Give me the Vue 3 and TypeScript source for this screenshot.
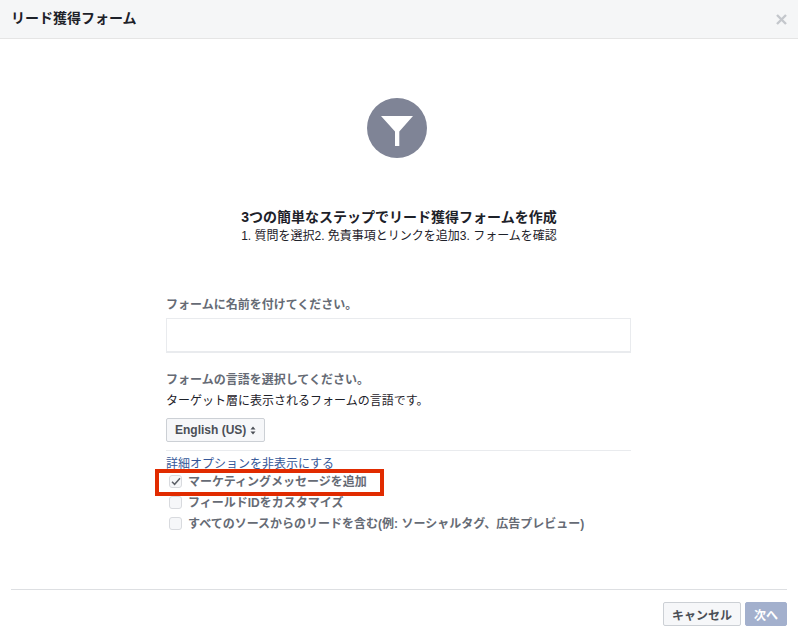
<script setup lang="ts">
interface Opt { label: string; checked: boolean }
const options: Opt[] = [
  { label: 'マーケティングメッセージを追加', checked: true },
  { label: 'フィールドIDをカスタマイズ', checked: false },
  { label: 'すべてのソースからのリードを含む(例: ソーシャルタグ、広告プレビュー)', checked: false },
]
</script>

<template>
  <div class="dialog">
    <header class="head">
      <span class="head-title">リード獲得フォーム</span>
      <svg class="close" width="11" height="11" viewBox="0 0 11 11"><path d="M1 1 10 10M10 1 1 10" stroke="#c4c7cc" stroke-width="2.4" fill="none"/></svg>
    </header>
    <main class="body">
      <svg class="funnel" width="60" height="60" viewBox="0 0 60 60">
        <circle cx="30" cy="30" r="30" fill="#7f8496"/>
        <path d="M14 18H46L32.300 33.500V48H28V33.500Z" fill="#fff"/>
      </svg>
      <h1 class="title">3つの簡単なステップでリード獲得フォームを作成</h1>
      <p class="steps">1. 質問を選択2. 免責事項とリンクを追加3. フォームを確認</p>
      <form class="form" @submit.prevent>
        <label class="label">フォームに名前を付けてください。</label>
        <input class="input" type="text" />
        <label class="label lang">フォームの言語を選択してください。</label>
        <p class="hint">ターゲット層に表示されるフォームの言語です。</p>
        <button class="select" type="button">
          English (US)
          <svg width="6" height="9" viewBox="0 0 6 9"><path d="M3 0.500 5.500 3.500H.5ZM3 8.500 .5 5.500H5.500Z" fill="#4b4f56"/></svg>
        </button>
        <div class="rule"></div>
        <a class="link">詳細オプションを非表示にする</a>
        <div class="checks">
          <div v-for="o in options" :key="o.label" class="check">
            <span class="box">
              <svg v-if="o.checked" width="10" height="9" viewBox="0 0 10 9"><path d="M1 4.800 3.600 7.300 9 1.200" stroke="#5d6168" stroke-width="1.500" fill="none"/></svg>
            </span>
            <span class="check-text">{{ o.label }}</span>
          </div>
          <div class="highlight"></div>
        </div>
      </form>
    </main>
    <footer class="foot">
      <div class="foot-inner">
        <button class="btn" type="button">キャンセル</button>
        <button class="btn primary" type="button">次へ</button>
      </div>
    </footer>
  </div>
</template>

<style scoped>
.dialog {
  width: 798px;
  height: 635px;
  background: #fff;
  display: flex;
  flex-direction: column;
  font-family: "Liberation Sans", "Noto Sans CJK JP", sans-serif;
  overflow: hidden;
}
.head {
  height: 38px;
  flex: none;
  background: #f5f6f7;
  border-bottom: 1px solid #e5e5e5;
  display: flex;
  align-items: center;
  justify-content: space-between;
  padding: 0 11px;
}
.head-title { font-size: 14px; line-height: 18px; font-weight: 700; color: #1d2129; margin-bottom: 3px; }
.close { margin-top: 1px; }
.body {
  flex: 1;
  display: flex;
  flex-direction: column;
  align-items: center;
  padding-top: 59px;
}
.funnel { display: block; margin-right: 4px; }
.title {
  margin: 50px 0 0;
  font-size: 14px;
  line-height: 18px;
  font-weight: 700;
  color: #1d2129;
}
.steps {
  margin: 2px 0 0;
  font-size: 12px;
  line-height: 16px;
  color: #1d2129;
}
.form {
  width: 465px;
  margin-top: 53px;
  align-self: flex-start;
  margin-left: 166px;
  display: flex;
  flex-direction: column;
  align-items: flex-start;
}
.label {
  font-size: 12px;
  line-height: 16px;
  font-weight: 700;
  color: #666b75;
}
.input {
  display: block;
  box-sizing: border-box;
  width: 465px;
  height: 35px;
  margin-top: 5px;
  border: 1px solid #e9ebee;
  border-bottom-width: 2px;
  background: #fff;
  outline: none;
}
.lang { margin-top: 19px; }
.hint {
  margin: 5px 0 0;
  font-size: 12px;
  line-height: 16px;
  color: #1d2129;
}
.select {
  box-sizing: border-box;
  height: 24px;
  margin-top: 9px;
  padding: 0 8px;
  display: flex;
  align-items: center;
  gap: 4px;
  border: 1px solid #ccd0d5;
  border-radius: 2px;
  background: #f6f7f9;
  font: 700 12px "Liberation Sans", "Noto Sans CJK JP", sans-serif;
  color: #4b4f56;
}
.rule {
  width: 100%;
  height: 1px;
  background: #e9ebee;
  margin-top: 8px;
}
.link {
  margin-top: 6px;
  font-size: 12px;
  line-height: 15px;
  color: #365899;
}
.checks {
  position: relative;
  display: flex;
  flex-direction: column;
  gap: 7px;
  margin-top: 1px;
  padding-left: 3px;
}
.check {
  display: flex;
  align-items: center;
  gap: 6px;
  height: 14px;
}
.box {
  box-sizing: border-box;
  width: 13px;
  height: 13px;
  margin-top: 2px;
  flex: none;
  display: flex;
  align-items: center;
  justify-content: center;
  border: 1px solid #d8dade;
  border-radius: 3px;
  background: #f6f7f9;
}
.check-text {
  font-size: 12px;
  font-weight: 700;
  color: #666b75;
  white-space: nowrap;
}
.highlight {
  position: absolute;
  left: -11px;
  top: -4px;
  width: 229px;
  height: 27px;
  box-sizing: border-box;
  border: 4px solid #e12b00;
  pointer-events: none;
}
.foot {
  flex: none;
  padding: 0 11px;
}
.foot-inner {
  border-top: 1px solid #dddfe2;
  height: 33px;
  display: flex;
  align-items: flex-start;
  justify-content: flex-end;
  gap: 4px;
  padding-top: 12px;
  box-sizing: content-box;
}
.btn {
  box-sizing: border-box;
  height: 24px;
  padding: 0 8px;
  border: 1px solid #ccd0d5;
  border-radius: 2px;
  background: #f6f7f9;
  font: 700 12px "Liberation Sans", "Noto Sans CJK JP", sans-serif;
  color: #4b4f56;
}
.primary {
  border-color: #a3b0cd;
  background: #a3b0cd;
  color: #fff;
}
</style>
